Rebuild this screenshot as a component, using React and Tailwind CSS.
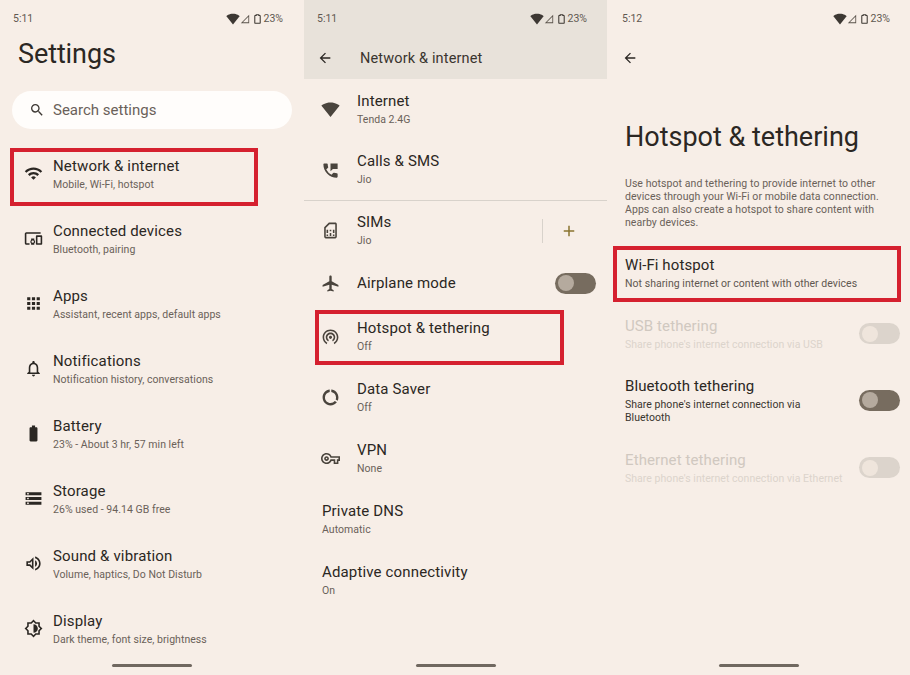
import React from 'react'
import {
  MdApps,
  MdArrowBack,
  MdAirplanemodeActive,
  MdBatteryFull,
  MdDataSaverOff,
  MdOutlineDevicesOther,
  MdOutlineNotifications,
  MdPermPhoneMsg,
  MdOutlineSimCard,
  MdOutlineVolumeUp,
  MdOutlineVpnKey,
  MdSearch,
  MdSignalWifi4Bar,
  MdStorage,
  MdWifi,
  MdWifiTethering,
  MdAdd,
} from 'react-icons/md'

// outlined hexagon with the half disc, the package's filled one reads too dark
const DisplayIcon = ({ className }) => (
  <svg viewBox="0 0 24 24" fill="currentColor" className={className}>
    <path d="M20 15.31L23.31 12 20 8.69V4h-4.69L12 .69 8.69 4H4v4.69L.69 12 4 15.31V20h4.69L12 23.31 15.31 20H20v-4.69zM18 14.48V18h-3.52L12 20.48 9.52 18H6v-3.52L3.52 12 6 9.52V6h3.52L12 3.52 14.48 6H18v3.52L20.48 12 18 14.48zM12 6.5v11c3.03 0 5.5-2.47 5.5-5.5S15.03 6.5 12 6.5z" />
  </svg>
)

const settingsRows = [
  { icon: MdWifi, title: 'Network & internet', sub: 'Mobile, Wi-Fi, hotspot', boxed: true },
  { icon: MdOutlineDevicesOther, title: 'Connected devices', sub: 'Bluetooth, pairing' },
  { icon: MdApps, title: 'Apps', sub: 'Assistant, recent apps, default apps' },
  { icon: MdOutlineNotifications, title: 'Notifications', sub: 'Notification history, conversations' },
  { icon: MdBatteryFull, title: 'Battery', sub: '23% - About 3 hr, 57 min left' },
  { icon: MdStorage, title: 'Storage', sub: '26% used - 94.14 GB free' },
  { icon: MdOutlineVolumeUp, title: 'Sound & vibration', sub: 'Volume, haptics, Do Not Disturb' },
  { icon: DisplayIcon, title: 'Display', sub: 'Dark theme, font size, brightness' },
]

const StatusBar = ({ time }) => (
  <div className="flex h-[36px] items-center justify-between pt-[2px] text-[10.5px] text-[#5f5850]">
    <span>{time}</span>
    <div className="flex items-center">
      <MdSignalWifi4Bar className="h-[14px] w-[14px] text-[#3d3833]" />
      <svg viewBox="0 0 12 12" className="h-[10px] w-[10px]">
        <path d="M11 1v10H1z M10 3.4L3.4 10H10z" fill="#5a534b" fillRule="evenodd" />
      </svg>
      <svg viewBox="0 0 8 11" className="ml-[4px] h-[10px] w-[7px]">
        <path d="M2.5 0.6h3v1h1.2a0.4 0.4 0 0 1 0.4 0.4v8a0.4 0.4 0 0 1-0.4 0.4h-5.4a0.4 0.4 0 0 1-0.4-0.4v-8a0.4 0.4 0 0 1 0.4-0.4h1.2z" fill="none" stroke="#3d3833" strokeWidth="1.2" />
      </svg>
      <span className="ml-[3px]">23%</span>
    </div>
  </div>
)

const HomeBar = () => (
  <div className="mt-auto flex h-[11px] justify-center">
    <div className="h-[3px] w-[80px] rounded-full bg-[#706860]" />
  </div>
)

const RedBox = ({ className }) => (
  <div className={`pointer-events-none absolute border-[4px] border-[#d5202f] ${className}`} />
)

const Text = ({ title, sub }) => (
  <div className={`min-w-0 ${sub ? 'pb-[2px]' : ''}`}>
    <div className="text-[15px] leading-[20px] tracking-[0.15px] text-[#2b2723]">{title}</div>
    {sub && <div className="mt-[2px] text-[10.5px] leading-[14px] tracking-[0.04px] text-[#6a6159]">{sub}</div>}
  </div>
)

const Switch = ({ disabled }) => (
  <div
    className={`flex h-[21px] w-[41px] shrink-0 items-center rounded-full px-[3px] ${
      disabled ? 'bg-[#dcd4cc]' : 'bg-[#776c5f]'
    }`}
  >
    <div className={`h-[16px] w-[16px] rounded-full ${disabled ? 'bg-[#efe5dc]' : 'bg-[#b5aa9e]'}`} />
  </div>
)

const SettingsPanel = () => (
  <div className="relative flex h-[675px] w-[304px] shrink-0 flex-col">
    <div className="pl-[13px] pr-[21px]">
      <StatusBar time="5:11" />
    </div>
    <h1 className="mt-[1px] pl-[18px] text-[27px] leading-[34px] tracking-[-0.1px] text-[#2b2723]">Settings</h1>
    <div className="mx-[12px] mt-[20px] flex h-[38px] items-center rounded-full bg-[#fffdfb] pl-[17px]">
      <MdSearch className="h-[16px] w-[16px] text-[#3d3833]" />
      <span className="ml-[8px] text-[15px] text-[#6a6159]">Search settings</span>
    </div>
    <div className="mt-[13px]">
      {settingsRows.map((row) => (
        <div key={row.title} className="relative flex h-[65px] items-center">
          <div className="flex w-[53px] shrink-0 justify-center pb-[2px] pl-[13px]">
            <row.icon className="h-[19px] w-[19px] text-[#2b2723]" />
          </div>
          <Text title={row.title} sub={row.sub} />
          {row.boxed && <RedBox className="left-[10px] top-[6px] h-[58px] w-[248px]" />}
        </div>
      ))}
    </div>
    <HomeBar />
  </div>
)

const NetRow = ({ icon: Icon, title, sub, children, className = 'h-[61px]' }) => (
  <div className={`relative flex items-center pr-[11px] ${className}`}>
    {Icon ? (
      <div className="flex w-[53px] shrink-0 justify-center">
        <Icon className="h-[19px] w-[19px] text-[#4a443d]" />
      </div>
    ) : (
      <div className="w-[18px] shrink-0" />
    )}
    <Text title={title} sub={sub} />
    {children}
  </div>
)

const NetworkPanel = () => (
  <div className="relative flex h-[675px] w-[303px] shrink-0 flex-col">
    <div className="h-[79px] bg-[#e8e2da] pl-[13px] pr-[20px]">
      <StatusBar time="5:11" />
      <div className="mt-[2px] flex h-[40px] items-center">
        <MdArrowBack className="h-[16px] w-[16px] text-[#2b2723]" />
        <span className="ml-[27px] pt-[1px] text-[14.5px] tracking-[0.15px] text-[#3a352f]">Network & internet</span>
      </div>
    </div>
    <NetRow icon={MdSignalWifi4Bar} title="Internet" sub="Tenda 2.4G" />
    <NetRow icon={MdPermPhoneMsg} title="Calls & SMS" sub="Jio" className="h-[60px]" />
    <div className="h-[1px] bg-[#d8d2cb]" />
    <NetRow icon={MdOutlineSimCard} title="SIMs" sub="Jio" className="h-[59px]">
      <div className="ml-auto flex items-center">
        <div className="h-[24px] w-[1px] bg-[#d8d2cb]" />
        <MdAdd className="ml-[17px] mr-[18px] h-[18px] w-[18px] text-[#8a7430]" />
      </div>
    </NetRow>
    <NetRow icon={MdAirplanemodeActive} title="Airplane mode" className="h-[46px]">
      <div className="ml-auto">
        <Switch />
      </div>
    </NetRow>
    <NetRow icon={MdWifiTethering} title="Hotspot & tethering" sub="Off">
      <RedBox className="left-[11px] top-[4px] h-[55px] w-[249px]" />
    </NetRow>
    <NetRow icon={MdDataSaverOff} title="Data Saver" sub="Off" />
    <NetRow icon={MdOutlineVpnKey} title="VPN" sub="None" />
    <NetRow title="Private DNS" sub="Automatic" />
    <NetRow title="Adaptive connectivity" sub="On" />
    <HomeBar />
  </div>
)

const subTones = {
  disabled: 'text-[#dcd4cc]',
  normal: 'text-[#5f5750]',
  dark: 'text-[#3a352f]',
}

const TetherRow = ({ title, children, tone = 'normal', aside, className = 'h-[61px]' }) => (
  <div className={`relative flex items-center justify-between pl-[18px] pr-[10px] ${className}`}>
    <div className="w-[240px] min-w-0">
      <div className={`text-[15px] leading-[20px] tracking-[0.1px] ${tone === 'disabled' ? 'text-[#d0c8c0]' : 'text-[#2b2723]'}`}>{title}</div>
      <div className={`mt-[2px] whitespace-pre-line text-[10.5px] leading-[13px] tracking-[0.04px] ${subTones[tone]}`}>
        {children}
      </div>
    </div>
    {aside}
  </div>
)

const HotspotPanel = () => (
  <div className="relative flex h-[675px] min-w-0 flex-1 flex-col">
    <div className="pl-[15px] pr-[20px]">
      <StatusBar time="5:12" />
      <div className="mt-[2px] flex h-[40px] items-center">
        <MdArrowBack className="h-[16px] w-[16px] text-[#2b2723]" />
      </div>
    </div>
    <h1 className="mt-[40px] pl-[18px] text-[27px] leading-[38px] text-[#2b2723]">Hotspot & tethering</h1>
    <p className="mt-[21px] pl-[18px] pr-[20px] text-[10.5px] leading-[13px] tracking-[0.07px] text-[#6a6159]">
      Use hotspot and tethering to provide internet to other
      <br />
      devices through your Wi-Fi or mobile data connection.
      <br />
      Apps can also create a hotspot to share content with
      <br />
      nearby devices.
    </p>
    <div className="mt-[13px]">
      <TetherRow title="Wi-Fi hotspot" aside={<RedBox className="left-[6px] top-[4px] h-[56px] w-[288px]" />}>
        Not sharing internet or content with other devices
      </TetherRow>
      <TetherRow title="USB tethering" tone="disabled" aside={<Switch disabled />}>
        Share phone's internet connection via USB
      </TetherRow>
      <TetherRow title="Bluetooth tethering" tone="dark" className="h-[72px]" aside={<Switch />}>
        {"Share phone's internet connection via\nBluetooth"}
      </TetherRow>
      <TetherRow title="Ethernet tethering" tone="disabled" className="h-[63px]" aside={<Switch disabled />}>
        Share phone's internet connection via Ethernet
      </TetherRow>
    </div>
    <HomeBar />
  </div>
)

export default function App() {
  return (
    <div className="flex h-[675px] w-[910px] overflow-hidden bg-[#f7eee7] font-['Roboto',sans-serif]">
      <SettingsPanel />
      <NetworkPanel />
      <HotspotPanel />
    </div>
  )
}
